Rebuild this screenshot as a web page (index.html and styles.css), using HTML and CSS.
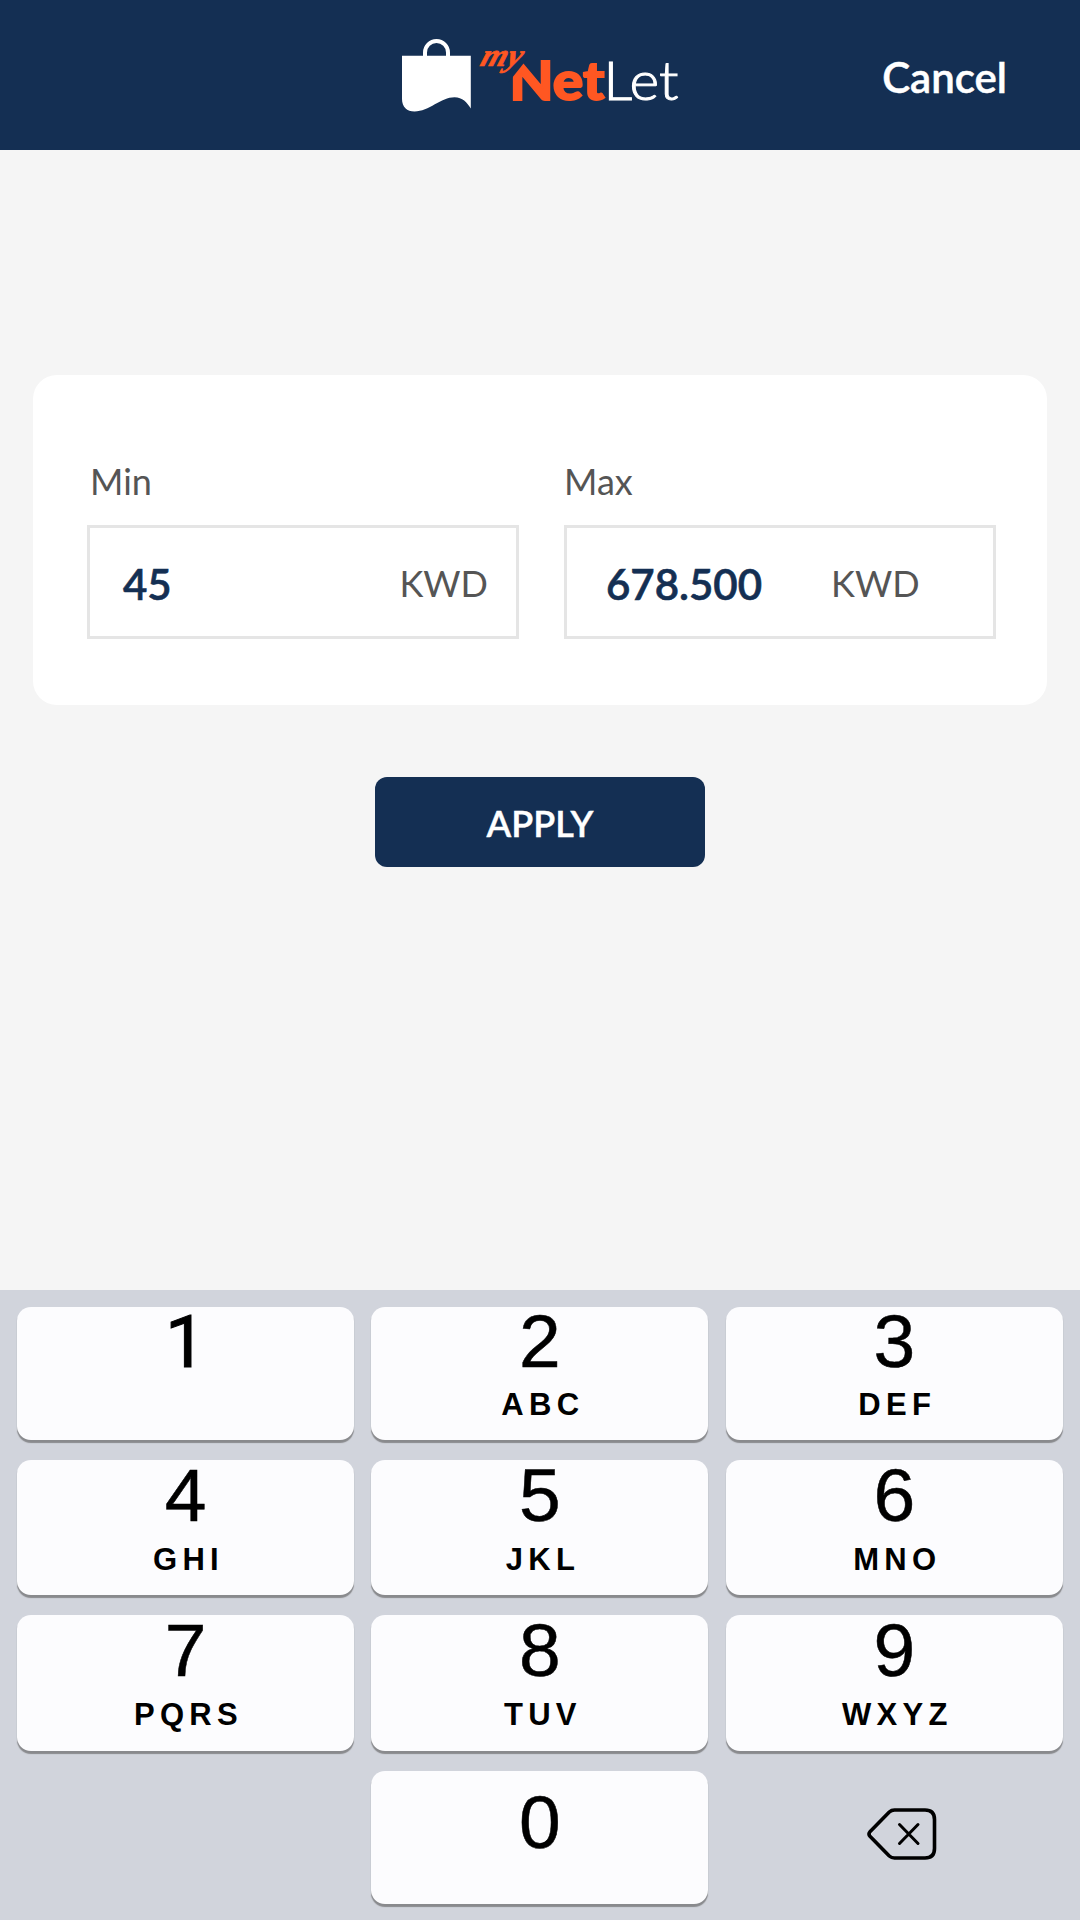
FILE: index.html
```html
<!DOCTYPE html>
<html lang="en">
<head>
<meta charset="utf-8">
<title>myNetLet</title>
<link rel="stylesheet" href="styles.css">
</head>
<body>
<div class="screen">
  <header class="topbar">
    <svg class="logo" viewBox="0 0 280 80" role="img" aria-label="myNetLet">
      <path class="bag-handle" d="M25 21V17.500a11.500 11.500 0 0 1 23 0V21"/>
      <path class="bag" d="M2 20.700H70.800V73.500C67 67.500 62.500 62.300 54.500 62.300C41 62.300 29 76.500 14.500 76.500C7 76.500 2 72 2 64Z"/>
      <text class="net" x="109.500" y="64.500" textLength="95" lengthAdjust="spacingAndGlyphs">Net</text>
      <path class="cut" d="M108 48L127.500 23.500L108 23.500Z"/>
      <text class="my" transform="translate(79 31) skewX(-18)" textLength="41" lengthAdjust="spacingAndGlyphs">my</text>
      <text class="let" x="203.500" y="64.500" textLength="75" lengthAdjust="spacingAndGlyphs">Let</text>
    </svg>
    <button class="cancel">Cancel</button>
  </header>

  <main class="content">
    <section class="card">
      <div class="field">
        <label class="label label-min">Min</label>
        <div class="box box-min"><span class="value">45</span><span class="unit">KWD</span></div>
      </div>
      <div class="field">
        <label class="label">Max</label>
        <div class="box box-max"><span class="value">678.500</span><span class="unit">KWD</span></div>
      </div>
    </section>
    <button class="apply">APPLY</button>
  </main>

  <div class="keypad">
    <div class="key"><span class="digit one">1</span></div>
    <div class="key"><span class="digit">2</span><span class="letters">ABC</span></div>
    <div class="key"><span class="digit">3</span><span class="letters">DEF</span></div>
    <div class="key mid"><span class="digit">4</span><span class="letters">GHI</span></div>
    <div class="key mid"><span class="digit">5</span><span class="letters">JKL</span></div>
    <div class="key mid"><span class="digit">6</span><span class="letters">MNO</span></div>
    <div class="key mid"><span class="digit">7</span><span class="letters">PQRS</span></div>
    <div class="key mid"><span class="digit">8</span><span class="letters">TUV</span></div>
    <div class="key mid"><span class="digit">9</span><span class="letters">WXYZ</span></div>
    <div class="key zero"><span class="digit">0</span></div>
    <div class="erase">
      <svg class="erase-icon" viewBox="0 0 70 54" aria-label="Delete">
        <path d="M27.500 3H58Q67.500 3 67.500 12.500V41.500Q67.500 51 58 51H27.500Q24.500 51 22.300 49L3.200 29.600Q.8 27 3.200 24.400L22.300 5Q24.500 3 27.500 3Z"/>
        <path class="cross" d="M32.500 17.500L51 36.500M51 17.500L32.500 36.500"/>
      </svg>
    </div>
  </div>
</div>
</body>
</html>
```
FILE: styles.css
```css
* {
  box-sizing: border-box;
}

body {
  margin: 0;
  font-family: Lato, "Liberation Sans", sans-serif;
}

button {
  border: 0;
  padding: 0;
  background: none;
  font-family: inherit;
  color: #fff;
}

.screen {
  width: 1080px;
  height: 1920px;
  display: flex;
  flex-direction: column;
  background: #f5f5f5;
  overflow: hidden;
}

.topbar {
  height: 150px;
  display: flex;
  justify-content: space-between;
  align-items: flex-start;
  padding: 35px 73px 0 400px;
  background: #142f53;
}

.logo {
  width: 280px;
  height: 80px;
}

.bag {
  fill: #fff;
}

.bag-handle {
  fill: none;
  stroke: #fff;
  stroke-width: 4;
}

.net {
  font-size: 53px;
  font-weight: 900;
  fill: #ff5722;
  stroke: #ff5722;
  stroke-width: 1.8;
}

.let {
  font-size: 53px;
  font-weight: 300;
  fill: #fff;
  stroke: #fff;
  stroke-width: 1;
}

.my {
  font: italic bold 32px "Liberation Serif", serif;
  fill: #ff5722;
  stroke: #ff5722;
  stroke-width: 0.6;
}

.cut {
  fill: #142f53;
}

.cancel {
  margin-top: 17px;
  font-size: 42px;
  font-weight: 600;
  line-height: 51px;
  -webkit-text-stroke: 0.5px #fff;
}

.content {
  flex: 1;
  display: flex;
  flex-direction: column;
  align-items: center;
  padding-top: 225px;
}

.card {
  width: 1014px;
  height: 330px;
  display: flex;
  gap: 45px;
  padding: 84px 51px 0 54px;
  border-radius: 24px;
  background: #fff;
}

.field {
  width: 432px;
  display: flex;
  flex-direction: column;
  gap: 22px;
}

.label {
  font-size: 36px;
  line-height: 44px;
  color: #555;
}

.label-min {
  padding-left: 3px;
}

.box {
  height: 114px;
  display: flex;
  align-items: flex-start;
  padding-top: 31px;
  border: 3px solid #e5e5e5;
}

.box-min {
  justify-content: space-between;
  padding-left: 33px;
  padding-right: 28px;
}

.box-max {
  gap: 69px;
  padding-left: 39px;
}

.value {
  font-size: 42px;
  font-weight: 600;
  line-height: 51px;
  color: #142f53;
  -webkit-text-stroke: 0.6px #142f53;
}

.unit {
  font-size: 36px;
  line-height: 49px;
  color: #555;
}

.apply {
  width: 330px;
  height: 90px;
  margin-top: 72px;
  padding-top: 1px;
  border-radius: 12px;
  background: #142f53;
  font-size: 36px;
  font-weight: 600;
  -webkit-text-stroke: 0.4px #fff;
}

.keypad {
  height: 630px;
  display: grid;
  grid-template-columns: repeat(3, 337px);
  grid-template-rows: 133px 135px 136px 133px;
  gap: 20px 17.4px;
  padding: 17px 0 0 17px;
  background: #d1d4dc;
  font-family: "Liberation Sans", sans-serif;
  color: #000;
}

.key {
  display: flex;
  flex-direction: column;
  align-items: center;
  border-radius: 14px;
  background: #fcfcfe;
  box-shadow: 0 2.5px 1px #898a8d;
}

.mid {
  padding-top: 1px;
}

.zero {
  grid-column: 2;
  padding-top: 17px;
}

.digit {
  font-size: 75px;
  line-height: 68px;
  -webkit-text-stroke: 0.5px #000;
}

.one {
  font-family: Roboto, sans-serif;
  font-size: 73px;
  line-height: 70px;
  -webkit-text-stroke: 1px #000;
}

.letters {
  margin-top: 12px;
  padding-left: 6px;
  font-size: 31px;
  font-weight: bold;
  line-height: 36px;
  letter-spacing: 5.3px;
}

.mid .letters {
  margin-top: 13px;
}

.erase {
  display: flex;
  align-items: flex-start;
  justify-content: center;
  padding: 36px 0 0 15px;
}

.erase-icon {
  width: 70px;
  height: 54px;
  fill: none;
  stroke: #000;
  stroke-width: 3.600;
  stroke-linecap: round;
  stroke-linejoin: round;
}

.cross {
  stroke-width: 3;
}
```
